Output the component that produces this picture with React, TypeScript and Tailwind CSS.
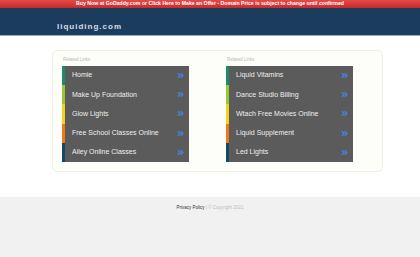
const leftLinks = [
  { label: 'Homie', bar: 'border-[#1e8a6c]' },
  { label: 'Make Up Foundation', bar: 'border-[#9cc43a]' },
  { label: 'Glow Lights', bar: 'border-[#f2d21c]' },
  { label: 'Free School Classes Online', bar: 'border-[#f07818]' },
  { label: 'Ailey Online Classes', bar: 'border-[#164a62]' },
];

const rightLinks = [
  { label: 'Liquid Vitamins', bar: 'border-[#1e8a6c]' },
  { label: 'Dance Studio Billing', bar: 'border-[#9cc43a]' },
  { label: 'Wtach Free Movies Online', bar: 'border-[#f2d21c]' },
  { label: 'Liquid Supplement', bar: 'border-[#f07818]' },
  { label: 'Led Lights', bar: 'border-[#164a62]' },
];

// small blue double chevron
function Arrows() {
  return (
    <svg width="7" height="7" viewBox="0 0 8 8">
      <path d="M1 1.5 L3.5 4 L1 6.5" fill="none" stroke="#4a7ee0" strokeWidth="1.7" />
      <path d="M4.2 1.5 L6.7 4 L4.2 6.5" fill="none" stroke="#4a7ee0" strokeWidth="1.7" />
    </svg>
  );
}

function LinkList({ links }: { links: { label: string; bar: string }[] }) {
  return (
    <div className="w-[164px] shrink-0">
      <p className="text-[4.5px] text-[#b8b8b8] h-[12px] leading-[12px] pl-[1px]">Related Links</p>
      <ul className="w-[127px] bg-[#5b5b5b]">
        {links.map((l) => (
          <li
            key={l.label}
            className={`h-[19.2px] flex items-center justify-between border-l-[3px] ${l.bar} pl-[7px] pr-[5px]`}
          >
            <span className="text-[7px] text-[#eeeeee]">{l.label}</span>
            <Arrows />
          </li>
        ))}
      </ul>
    </div>
  );
}

export default function App() {
  return (
    <div className="w-[420px] h-[257px] flex flex-col bg-white font-['Liberation_Sans',Arial,sans-serif]">
      {/* barra de oferta */}
      <div className="h-[8px] bg-gradient-to-b from-[#e24a48] to-[#c82a2a] flex items-center justify-center">
        <span className="text-[5.2px] font-bold text-white leading-none">
          Buy Now at GoDaddy.com or Click Here to Make an Offer - Domain Price is subject to change until confirmed
        </span>
      </div>

      {/* cabecera */}
      <div className="h-[27px] bg-[#1c3c5e] flex items-center pl-[57px] pt-[10px]">
        <span className="text-[8px] font-bold tracking-[1px] text-[#d8dde6]">liquiding.com</span>
      </div>
      <div className="h-[1px] bg-[#8fb0c8]" />

      {/* contenido */}
      <div className="h-[161px] pt-[14px] pl-[52px]">
        <div className="w-[331px] h-[122px] rounded-[5px] border border-[#eef0e2] bg-[#fdfdf9] flex pl-[9px] pt-[3px] overflow-hidden">
          <LinkList links={leftLinks} />
          <LinkList links={rightLinks} />
        </div>
      </div>

      {/* pie */}
      <div className="flex-1 bg-[#f1f1f1] flex justify-center pt-[9px]">
        <p className="text-[4.5px] leading-none">
          <span className="text-[#333333]">Privacy Policy</span>
          <span className="text-[#bdbdbd]"> | © Copyright 2021</span>
        </p>
      </div>
    </div>
  );
}
